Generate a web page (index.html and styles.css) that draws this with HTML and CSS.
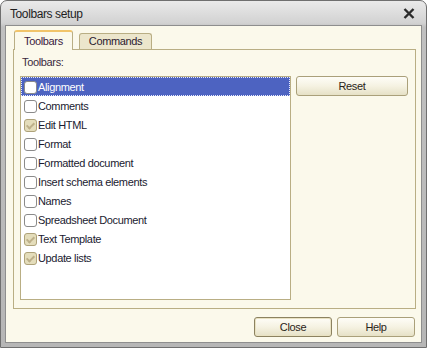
FILE: index.html
```html
<!DOCTYPE html>
<html lang="en">

<head>
    <meta charset="UTF-8">
    <title>Toolbars setup</title>
    <link rel="stylesheet" href="styles.css">
</head>

<body>
    <div class="window">
        <div class="titlebar">
            <span class="title">Toolbars setup</span>
            <svg class="close" width="12" height="11" viewBox="0 0 12 11">
                <path d="M1.5 1 L10.5 10 M10.5 1 L1.5 10" stroke="#2b2b2b" stroke-width="2.4" fill="none" />
            </svg>
        </div>
        <div class="client">
            <div class="tabs">
                <div class="tab active">Toolbars</div>
                <div class="tab">Commands</div>
            </div>
            <div class="panel">
                <div class="label">Toolbars:</div>
                <div class="panel-body">
                    <div class="list">
                        <div class="row selected"><span class="cb"></span>Alignment</div>
                        <div class="row"><span class="cb"></span>Comments</div>
                        <div class="row"><span class="cb checked"></span>Edit HTML</div>
                        <div class="row"><span class="cb"></span>Format</div>
                        <div class="row"><span class="cb"></span>Formatted document</div>
                        <div class="row"><span class="cb"></span>Insert schema elements</div>
                        <div class="row"><span class="cb"></span>Names</div>
                        <div class="row"><span class="cb"></span>Spreadsheet Document</div>
                        <div class="row"><span class="cb checked"></span>Text Template</div>
                        <div class="row"><span class="cb checked"></span>Update lists</div>
                    </div>
                    <button class="btn reset">Reset</button>
                </div>
            </div>
            <div class="footer">
                <button class="btn default">Close</button>
                <button class="btn">Help</button>
            </div>
        </div>
    </div>
</body>

</html>
```

FILE: styles.css
```css
body {
    margin: 0;
    padding: 0;
    font-family: "Liberation Sans", Arial, sans-serif;
    font-size: 11px;
    letter-spacing: -0.35px;
}

.window {
    width: 427px;
    height: 348px;
    box-sizing: border-box;
    border: 1px solid #6f6f6f;
    border-radius: 7px 7px 0 0;
    background: linear-gradient(to bottom, #eaeaea 0, #d2d2d2 22px, #c0c0c0 26px, #b6b6b6 100%);
    padding: 0 4px 4px 4px;
}

.titlebar {
    height: 24px;
    display: flex;
    align-items: center;
    justify-content: space-between;
    padding: 0 7px 0 5px;
}

.title {
    font-size: 12px;
    letter-spacing: -0.4px;
    color: #1e1e1e;
    padding-top: 1px;
}

.close {
    display: block;
    margin-top: 1px;
}

.client {
    height: 318px;
    box-sizing: border-box;
    border: 1px solid #8e8e8e;
    background-color: #fbf9eb;
    padding: 4px 5px 0 7px;
    display: flex;
    flex-direction: column;
}

.tabs {
    display: flex;
    align-items: flex-end;
    gap: 6px;
    padding-left: 1px;
    height: 19px;
    position: relative;
    z-index: 1;
}

.tab {
    border: 1px solid #b9ae84;
    border-bottom: none;
    border-radius: 3px 3px 0 0;
    background-color: #ece6cc;
    color: #2a2030;
    height: 15px;
    line-height: 15px;
    padding: 0 9px;
}

.tab.active {
    background-color: #fbf9eb;
    border-top: 2px solid #f1c46a;
    height: 18px;
    line-height: 18px;
    margin-bottom: -1px;
    color: #3a1a40;
}

.panel {
    border: 1px solid #b9ae84;
    height: 260px;
    box-sizing: border-box;
    padding: 0 6px 0 6px;
}

.label {
    color: #3a2a40;
    height: 26px;
    line-height: 20px;
    padding-left: 2px;
    padding-top: 2px;
    box-sizing: border-box;
}

.panel-body {
    display: flex;
    align-items: flex-start;
    gap: 5px;
}

.list {
    width: 271px;
    height: 224px;
    box-sizing: border-box;
    border: 1px solid #b9ae84;
    background-color: #fff;
}

.row {
    height: 19px;
    display: flex;
    align-items: center;
    color: #1a1a30;
    padding-left: 3px;
    box-sizing: border-box;
}

.row.selected {
    background-color: #4d63c1;
    color: #fff;
    outline: 1px dotted #e8ecff;
    outline-offset: -1px;
}

.cb {
    width: 11px;
    height: 11px;
    border: 1px solid #8a8a8a;
    border-radius: 3px;
    background-color: #fff;
    margin-right: 1px;
    margin-top: 1px;
    position: relative;
}

.cb.checked {
    background-color: #e4ddbb;
    border-color: #aea27a;
}

.cb.checked::after {
    content: "";
    position: absolute;
    left: 3px;
    top: 1px;
    width: 3px;
    height: 6px;
    border: solid #bdb08a;
    border-width: 0 2px 2px 0;
    transform: rotate(45deg);
}

.btn {
    font-family: "Liberation Sans", Arial, sans-serif;
    font-size: 11px;
    letter-spacing: -0.35px;
    height: 20px;
    padding: 0;
    border: 1px solid #aaa07a;
    border-radius: 3px;
    background: linear-gradient(to bottom, #fefdf7 0, #f5f2e2 50%, #e6e1c6 100%);
    color: #2a2418;
}

.reset {
    width: 112px;
}

.footer {
    display: flex;
    justify-content: flex-end;
    gap: 5px;
    padding-top: 8px;
    padding-right: 1px;
}

.footer .btn {
    width: 78px;
}

.btn.default {
    border-color: #8c8260;
    box-shadow: inset 0 0 0 1px #e9e2c2;
}
```
